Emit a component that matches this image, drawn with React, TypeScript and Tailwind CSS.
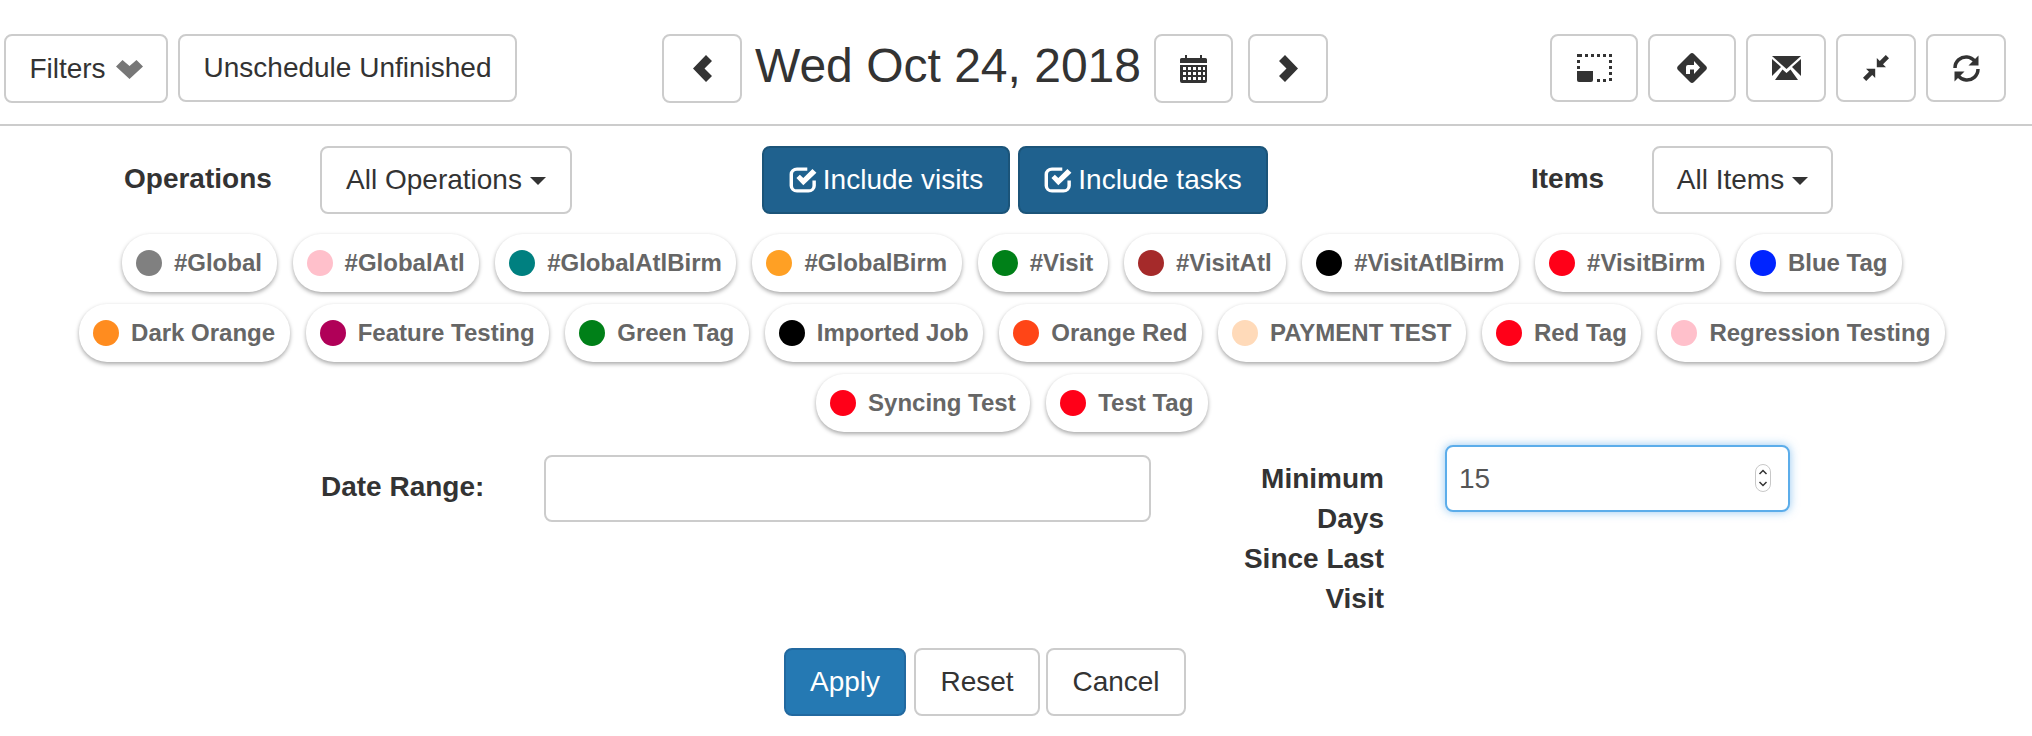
import React from "react";

const F = "[font-family:'Liberation_Sans',Arial,sans-serif]";
const btn = "flex items-center justify-center rounded-[8px] border-2 border-[#ccc] bg-white text-[#333] text-[28px] leading-[40px]";

const ChevronDown = () => (
  <svg width="27" height="19" viewBox="0 0 27 19" className="ml-[10px] mt-[2px]"><path d="M0 6.500 L6.500 0 L13.500 6 L20.500 0 L27 6.500 L13.500 19 Z" fill="#777" /></svg>
);
const ChevronLeft = () => (
  <svg width="19" height="27" viewBox="0 0 19 27"><path d="M13 0 L19 6 L11.500 13.500 L19 21 L13 27 L0 13.500 Z" fill="#333" /></svg>
);
const ChevronRight = () => (
  <svg width="19" height="27" viewBox="0 0 19 27"><path d="M6 0 L0 6 L7.500 13.500 L0 21 L6 27 L19 13.500 Z" fill="#333" /></svg>
);
const Calendar = () => (
  <svg width="27" height="28" viewBox="0 0 27 28">
    <path d="M5 0h2v3h13V0h2v3h3.500a1.500 1.500 0 0 1 1.500 1.500V8H0V4.500A1.500 1.500 0 0 1 1.500 3H5z" fill="#333" />
    <path fillRule="evenodd" d="M0 10h27v16a2 2 0 0 1-2 2H2a2 2 0 0 1-2-2z M3 12v3h3v-3z M8 12v3h3v-3z M13 12v3h3v-3z M18 12v3h3v-3z M23 12v3h2v-3z M3 17v3h3v-3z M8 17v3h3v-3z M13 17v3h3v-3z M18 17v3h3v-3z M23 17v3h2v-3z M3 22v3h3v-3z M8 22v3h3v-3z M13 22v3h3v-3z M18 22v3h3v-3z M23 22v3h2v-3z" fill="#333" />
  </svg>
);
const Dotted = () => (
  <svg width="35" height="28" viewBox="0 0 35 28" fill="#333">
    {[2, 8, 14, 20, 26, 32].map((x) => <rect key={x} x={x} y="0" width="3" height="3" />)}
    {[0, 6, 12].map((y) => <rect key={y} x="0" y={y} width="3" height="3" />)}
    {[0, 6, 12, 18, 24].map((y) => <rect key={y} x="32" y={y} width="3" height="3" />)}
    {[20, 26].map((x) => <rect key={x} x={x} y="25" width="3" height="3" />)}
    <path d="M0 17h16v9a2 2 0 0 1-2 2H2a2 2 0 0 1-2-2z" />
  </svg>
);
const Diamond = () => (
  <svg width="30" height="30" viewBox="0 0 30 30">
    <path d="M13 1 a3 3 0 0 1 4 0 L29 13 a3 3 0 0 1 0 4 L17 29 a3 3 0 0 1-4 0 L1 17 a3 3 0 0 1 0-4 Z" fill="#333" />
    <path d="M9 21 V14 a2 2 0 0 1 2-2 h6 V8 l6 6.500 -6 6.500 v-4.500 h-4 v4.500 z" fill="#fff" />
  </svg>
);
const Mail = () => (
  <svg width="29" height="24" viewBox="0 0 29 24" fill="#333">
    <path d="M0 0h29L14.500 13z" />
    <path d="M0 3 L9 11 L0 20z" />
    <path d="M29 3 L20 11 L29 20z" />
    <path d="M3 24 L10.500 13.500 L14.500 17 L18.500 13.500 L26 24z" />
  </svg>
);
const Compress = () => (
  <svg width="26" height="26" viewBox="0 0 26 26" fill="#333">
    <path d="M13.800 3 V12.200 H23 L20 9.200 L26 3.200 L22.800 0 L16.800 6 Z" />
    <path d="M12.200 23 V13.800 H3 L6 16.800 L0 22.800 L3.200 26 L9.200 20 Z" />
  </svg>
);
const Refresh = () => (
  <svg width="27" height="27" viewBox="0 0 27 27" fill="none">
    <path d="M2 13 C2 6 8 1.500 14 2 C17.500 2.300 20 4 22 6.500" stroke="#333" strokeWidth="3.500" />
    <path d="M25.500 0.500 V10.500 H15.500 Z" fill="#333" />
    <path d="M25 14 C25 21 19 25.500 13 25 C9.500 24.700 7 23 5 20.500" stroke="#333" strokeWidth="3.500" />
    <path d="M1.500 26.500 V16.500 H11.500 Z" fill="#333" />
  </svg>
);
const Check = () => (
  <svg width="28" height="26" viewBox="0 1 24.500 25" preserveAspectRatio="none" className="mr-[6px]" fill="none">
    <path d="M16 3 H7 a5 5 0 0 0-5 5 V19 a5 5 0 0 0 5 5 H17 a5 5 0 0 0 5-5 V14" stroke="#fff" strokeWidth="3" />
    <path d="M6.500 11.500 L9.500 8.500 L12.500 11.500 L20.500 3 L24 6.500 L12.500 18.500 Z" fill="#fff" />
  </svg>
);
const Caret = () => (
  <span className="ml-[8px] mt-[2px] h-0 w-0 border-x-[8px] border-t-[8px] border-x-transparent border-t-[#333]" />
);

const tags: [string, string][] = [
  ["#Global", "#808080"], ["#GlobalAtl", "#ffc0cb"], ["#GlobalAtlBirm", "#008080"], ["#GlobalBirm", "#ffa024"],
  ["#Visit", "#008018"], ["#VisitAtl", "#a52a2a"], ["#VisitAtlBirm", "#000000"], ["#VisitBirm", "#ff0018"],
  ["Blue Tag", "#0024ff"], ["Dark Orange", "#ff8c1f"], ["Feature Testing", "#b00058"], ["Green Tag", "#008018"],
  ["Imported Job", "#000000"], ["Orange Red", "#ff4517"], ["PAYMENT TEST", "#ffdab9"], ["Red Tag", "#ff0018"],
  ["Regression Testing", "#ffc0cb"], ["Syncing Test", "#ff0018"], ["Test Tag", "#ff0018"],
];

export default function App() {
  return (
    <div className={`${F} w-[2032px] h-[736px] bg-white overflow-hidden text-[#333]`}>
      <header className="flex h-[126px] border-b-2 border-[#ccc] pt-[34px]">
        <div className="flex w-[662px] pl-[4px] gap-[10px] items-start">
          <button className={`${btn} w-[164px] h-[69px]`}>Filters<ChevronDown /></button>
          <button className={`${btn} w-[339px] h-[68px]`}>Unschedule Unfinished</button>
        </div>
        <div className="flex w-[888px] items-start">
          <button className={`${btn} w-[80px] h-[69px]`}><ChevronLeft /></button>
          <h1 className="w-[412px] h-[69px] text-center text-[48px] leading-[64px] font-normal">Wed Oct 24, 2018</h1>
          <button className={`${btn} w-[79px] h-[69px]`}><Calendar /></button>
          <button className={`${btn} w-[80px] h-[69px] ml-[15px]`}><ChevronRight /></button>
        </div>
        <div className="flex items-start gap-[10px]">
          <button className={`${btn} w-[88px] h-[68px]`}><Dotted /></button>
          <button className={`${btn} w-[88px] h-[68px]`}><Diamond /></button>
          <button className={`${btn} w-[80px] h-[68px]`}><Mail /></button>
          <button className={`${btn} w-[80px] h-[68px]`}><Compress /></button>
          <button className={`${btn} w-[80px] h-[68px]`}><Refresh /></button>
        </div>
      </header>

      <section className="flex items-center mt-[20px] h-[68px]">
        <span className="ml-[124px] w-[196px] text-[28px] leading-[40px] font-bold -mt-[3px]">Operations</span>
        <button className={`${btn} w-[252px] h-[68px]`}>All Operations<Caret /></button>
        <button className="ml-[190px] flex h-[68px] w-[248px] items-center justify-center rounded-[8px] border-2 border-[#1b5479] bg-[#1f618e] text-[28px] text-white"><Check />Include visits</button>
        <button className="ml-[8px] flex h-[68px] w-[250px] items-center justify-center rounded-[8px] border-2 border-[#1b5479] bg-[#1f618e] text-[28px] text-white"><Check />Include tasks</button>
        <span className="ml-[263px] w-[121px] text-[28px] leading-[40px] font-bold -mt-[3px]">Items</span>
        <button className={`${btn} w-[181px] h-[68px]`}>All Items<Caret /></button>
      </section>

      <section className="ml-[32px] w-[1960px] mt-[20px] flex flex-wrap justify-center gap-x-[16px] gap-y-[12px]">
        {tags.map(([name, color]) => (
          <div key={name} className="flex h-[58px] items-center gap-[12px] rounded-[28px] bg-white pl-[14px] pr-[14.6px] shadow-[0_2px_4px_rgba(0,0,0,0.35)]">
            <span className="h-[26px] w-[26px] rounded-full" style={{ backgroundColor: color }} />
            <span className="text-[24px] font-bold text-[#666] whitespace-nowrap">{name}</span>
          </div>
        ))}
      </section>

      <section className="flex h-[216px]">
        <label className="ml-[321px] w-[223px] mt-[35px] h-[40px] text-[28px] leading-[40px] font-bold">Date Range:</label>
        <input readOnly className="mt-[23px] h-[67px] w-[607px] rounded-[8px] border-2 border-[#ccc] bg-white" />
        <label className="ml-[83px] w-[150px] mt-[27px] h-fit text-right text-[28px] leading-[40px] font-bold">Minimum<br />Days<br />Since Last<br />Visit</label>
        <div className="relative ml-[61px] mt-[13px] h-[67px] w-[345px]">
          <input readOnly value="15" className="h-full w-full rounded-[8px] border-2 border-[#5cadea] bg-white px-[12px] text-[28px] text-[#555] outline-none shadow-[0_0_10px_rgba(102,175,233,0.7)]" />
          <svg width="16" height="28" viewBox="0 0 16 28" className="absolute right-[19px] top-[19px]" fill="none">
            <rect x="0.500" y="0.500" width="15" height="27" rx="7.500" fill="#fff" stroke="#c8c8c8" />
            <path d="M4.500 10 L8 6.500 L11.500 10 M4.500 18 L8 21.500 L11.500 18" stroke="#333" strokeWidth="1.500" />
          </svg>
        </div>
      </section>

      <footer className="flex ml-[784px]">
        <button className="flex h-[68px] w-[122px] items-center justify-center rounded-[8px] border-2 border-[#2269a0] bg-[#2579b3] text-[28px] text-white">Apply</button>
        <button className={`${btn} ml-[8px] w-[126px] h-[68px]`}>Reset</button>
        <button className={`${btn} ml-[6px] w-[140px] h-[68px]`}>Cancel</button>
      </footer>
    </div>
  );
}
